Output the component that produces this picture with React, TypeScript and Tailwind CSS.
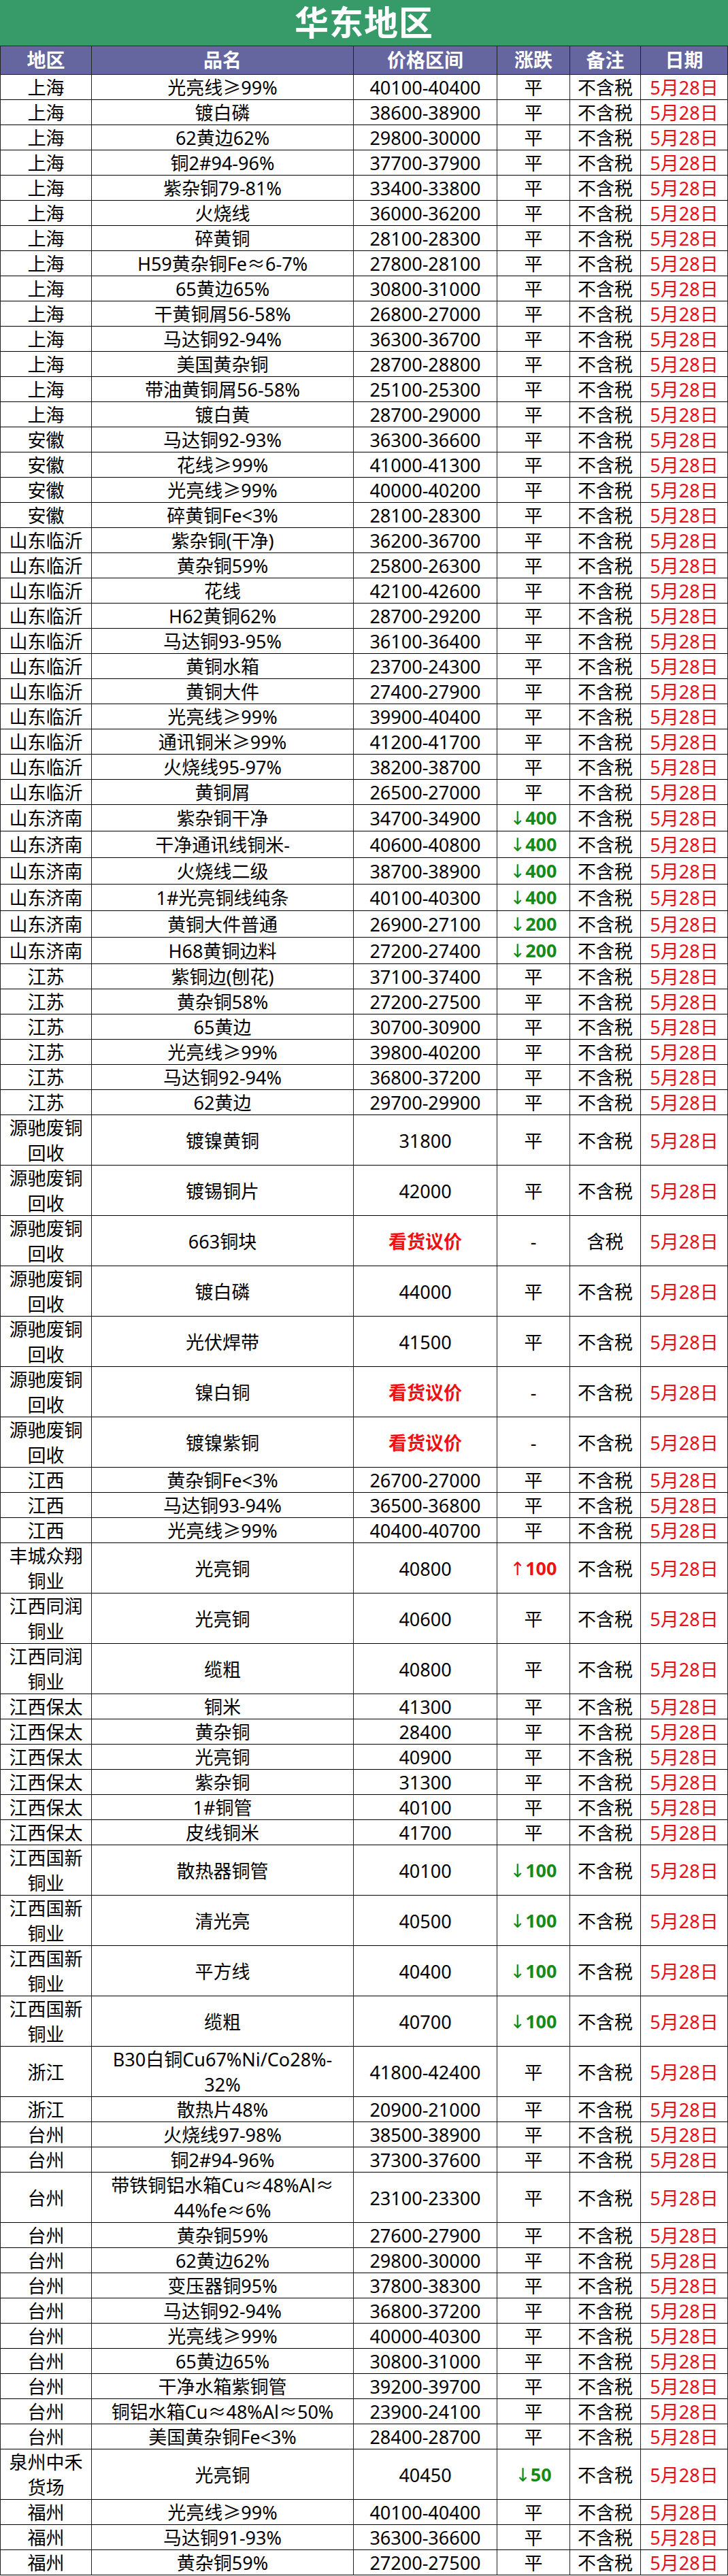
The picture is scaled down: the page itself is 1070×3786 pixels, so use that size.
import React from 'react';

type Row = {
  area: string;
  name: string;
  price: string;
  change: string;
  note?: string;
  size?: 'n' | 'j' | 't';
};

const r = (area: string, name: string, price: string, change = '平', size: Row['size'] = 'n', note = '不含税'): Row => ({
  area,
  name,
  price,
  change,
  note,
  size,
});

const rows: Row[] = [
  r('上海', '光亮线≥99%', '40100-40400'),
  r('上海', '镀白磷', '38600-38900'),
  r('上海', '62黄边62%', '29800-30000'),
  r('上海', '铜2#94-96%', '37700-37900'),
  r('上海', '紫杂铜79-81%', '33400-33800'),
  r('上海', '火烧线', '36000-36200'),
  r('上海', '碎黄铜', '28100-28300'),
  r('上海', 'H59黄杂铜Fe≈6-7%', '27800-28100'),
  r('上海', '65黄边65%', '30800-31000'),
  r('上海', '干黄铜屑56-58%', '26800-27000'),
  r('上海', '马达铜92-94%', '36300-36700'),
  r('上海', '美国黄杂铜', '28700-28800'),
  r('上海', '带油黄铜屑56-58%', '25100-25300'),
  r('上海', '镀白黄', '28700-29000'),
  r('安徽', '马达铜92-93%', '36300-36600'),
  r('安徽', '花线≥99%', '41000-41300'),
  r('安徽', '光亮线≥99%', '40000-40200'),
  r('安徽', '碎黄铜Fe<3%', '28100-28300'),
  r('山东临沂', '紫杂铜(干净)', '36200-36700'),
  r('山东临沂', '黄杂铜59%', '25800-26300'),
  r('山东临沂', '花线', '42100-42600'),
  r('山东临沂', 'H62黄铜62%', '28700-29200'),
  r('山东临沂', '马达铜93-95%', '36100-36400'),
  r('山东临沂', '黄铜水箱', '23700-24300'),
  r('山东临沂', '黄铜大件', '27400-27900'),
  r('山东临沂', '光亮线≥99%', '39900-40400'),
  r('山东临沂', '通讯铜米≥99%', '41200-41700'),
  r('山东临沂', '火烧线95-97%', '38200-38700'),
  r('山东临沂', '黄铜屑', '26500-27000'),
  r('山东济南', '紫杂铜干净', '34700-34900', '↓400', 'j'),
  r('山东济南', '干净通讯线铜米-', '40600-40800', '↓400', 'j'),
  r('山东济南', '火烧线二级', '38700-38900', '↓400', 'j'),
  r('山东济南', '1#光亮铜线纯条', '40100-40300', '↓400', 'j'),
  r('山东济南', '黄铜大件普通', '26900-27100', '↓200', 'j'),
  r('山东济南', 'H68黄铜边料', '27200-27400', '↓200', 'j'),
  r('江苏', '紫铜边(刨花)', '37100-37400'),
  r('江苏', '黄杂铜58%', '27200-27500'),
  r('江苏', '65黄边', '30700-30900'),
  r('江苏', '光亮线≥99%', '39800-40200'),
  r('江苏', '马达铜92-94%', '36800-37200'),
  r('江苏', '62黄边', '29700-29900'),
  r('源驰废铜\n回收', '镀镍黄铜', '31800', '平', 't'),
  r('源驰废铜\n回收', '镀锡铜片', '42000', '平', 't'),
  r('源驰废铜\n回收', '663铜块', '看货议价', '-', 't', '含税'),
  r('源驰废铜\n回收', '镀白磷', '44000', '平', 't'),
  r('源驰废铜\n回收', '光伏焊带', '41500', '平', 't'),
  r('源驰废铜\n回收', '镍白铜', '看货议价', '-', 't'),
  r('源驰废铜\n回收', '镀镍紫铜', '看货议价', '-', 't'),
  r('江西', '黄杂铜Fe<3%', '26700-27000'),
  r('江西', '马达铜93-94%', '36500-36800'),
  r('江西', '光亮线≥99%', '40400-40700'),
  r('丰城众翔\n铜业', '光亮铜', '40800', '↑100', 't'),
  r('江西同润\n铜业', '光亮铜', '40600', '平', 't'),
  r('江西同润\n铜业', '缆粗', '40800', '平', 't'),
  r('江西保太', '铜米', '41300'),
  r('江西保太', '黄杂铜', '28400'),
  r('江西保太', '光亮铜', '40900'),
  r('江西保太', '紫杂铜', '31300'),
  r('江西保太', '1#铜管', '40100'),
  r('江西保太', '皮线铜米', '41700'),
  r('江西国新\n铜业', '散热器铜管', '40100', '↓100', 't'),
  r('江西国新\n铜业', '清光亮', '40500', '↓100', 't'),
  r('江西国新\n铜业', '平方线', '40400', '↓100', 't'),
  r('江西国新\n铜业', '缆粗', '40700', '↓100', 't'),
  r('浙江', 'B30白铜Cu67%Ni/Co28%-\n32%', '41800-42400', '平', 't'),
  r('浙江', '散热片48%', '20900-21000'),
  r('台州', '火烧线97-98%', '38500-38900'),
  r('台州', '铜2#94-96%', '37300-37600'),
  r('台州', '带铁铜铝水箱Cu≈48%Al≈\n44%fe≈6%', '23100-23300', '平', 't'),
  r('台州', '黄杂铜59%', '27600-27900'),
  r('台州', '62黄边62%', '29800-30000'),
  r('台州', '变压器铜95%', '37800-38300'),
  r('台州', '马达铜92-94%', '36800-37200'),
  r('台州', '光亮线≥99%', '40000-40300'),
  r('台州', '65黄边65%', '30800-31000'),
  r('台州', '干净水箱紫铜管', '39200-39700'),
  r('台州', '铜铝水箱Cu≈48%Al≈50%', '23900-24100'),
  r('台州', '美国黄杂铜Fe<3%', '28400-28700'),
  r('泉州中禾\n货场', '光亮铜', '40450', '↓50', 't'),
  r('福州', '光亮线≥99%', '40100-40400'),
  r('福州', '马达铜91-93%', '36300-36600'),
  r('福州', '黄杂铜59%', '27200-27500'),
];

const cols = 'grid grid-cols-[135px_385px_211px_107px_104px_128px]';
const cell = 'flex items-center justify-center border-r border-[#222] text-center whitespace-pre-line leading-[37px]';

// arrow glyph from a latin font so it stays narrow, like the sheet
function ChangeCell({ value }: { value: string }) {
  const up = value.startsWith('↑');
  const down = value.startsWith('↓');
  if (!up && !down) return <span>{value}</span>;
  return (
    <span className={`font-bold ${down ? 'text-[#168a16]' : 'text-[#ee1111]'}`}>
      <span className="font-normal" style={{ fontFamily: '"DejaVu Sans", sans-serif' }}>
        {value[0]}
      </span>
      {value.slice(1)}
    </span>
  );
}

export default function App() {
  return (
    <div
      className="w-[1070px] bg-white text-black"
      style={{ fontFamily: '"Noto Sans", "Noto Sans CJK SC", sans-serif' }}
    >
      <div className="flex h-[68px] items-center justify-center border-b border-[#222] bg-[#379a69]">
        <h1 className="text-[50px] font-bold tracking-[1px] text-white">华东地区</h1>
      </div>

      <div className={`${cols} h-[42px] border-b border-[#222] bg-[#6566a0] text-[28px] font-bold text-white`}>
        {['地区', '品名', '价格区间', '涨跌', '备注', '日期'].map((h, i) => (
          <div key={h} className={`${cell} ${i === 0 ? 'border-l' : ''}`}>
            {h}
          </div>
        ))}
      </div>

      {rows.map((row, i) => {
        const h = row.size === 't' ? 'h-[74px]' : row.size === 'j' ? 'h-[39px]' : 'h-[37px]';
        return (
          <div key={i} className={`${cols} ${h} border-b border-black text-[27px]`}>
            <div className={`${cell} border-l`}>{row.area}</div>
            <div className={cell}>{row.name}</div>
            <div className={cell}>
              {row.price === '看货议价' ? <span className="font-bold text-[#ee1111]">{row.price}</span> : row.price}
            </div>
            <div className={cell}>
              <ChangeCell value={row.change} />
            </div>
            <div className={cell}>{row.note}</div>
            <div className={`${cell} text-[#e8111a]`}>5月28日</div>
          </div>
        );
      })}
    </div>
  );
}
